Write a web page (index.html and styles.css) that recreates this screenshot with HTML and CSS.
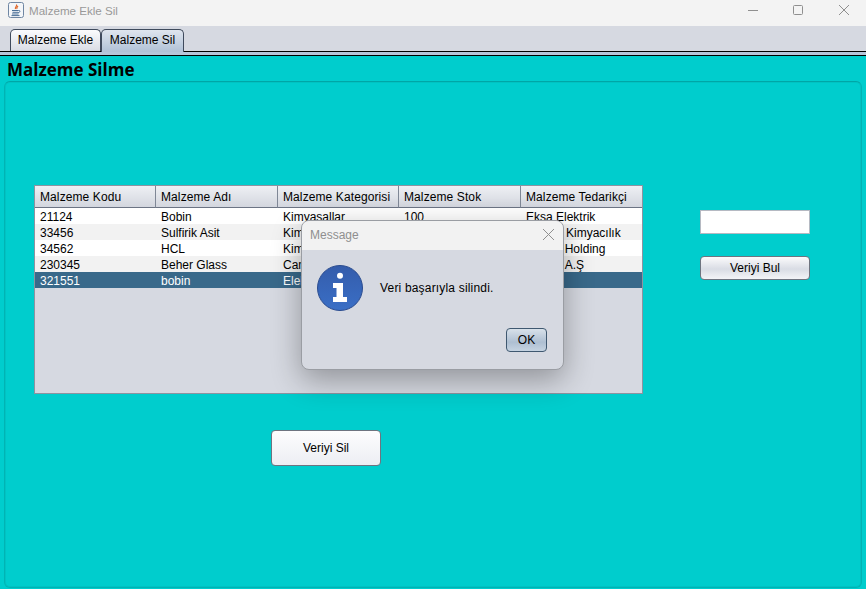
FILE: index.html
```html
<!DOCTYPE html>
<html lang="en">

<head>
    <meta charset="UTF-8">
    <title>Malzeme Ekle Sil</title>
    <link rel="stylesheet" href="styles.css">
</head>

<body>
    <div class="titlebar">
        <svg class="appicon" width="16" height="16" viewBox="0 0 16 16">
            <rect x="0.5" y="0.5" width="15" height="15" rx="2" fill="#f4f6f9" stroke="#6f86a3" />
            <path d="M8.5 2.5c1 1.5-2 2.5-1 4.5M10 4c-1 1-1.8 1.6-1 3" fill="none" stroke="#e0662a" stroke-width="1.2" />
            <path d="M4 8.5h6.5M4.500 10.300h5.500M4 12h6.500M3.500 13.600h8M10.500 8.500c2-.5 2 2-.5 2.300" fill="none" stroke="#4a6f97" stroke-width="1" />
        </svg>
        <span class="apptitle">Malzeme Ekle Sil</span>
        <div class="winbtns">
            <svg width="10" height="10" viewBox="0 0 10 10"><path d="M0 5.500h10" stroke="#8f8f8f" fill="none" /></svg>
            <svg width="10" height="10" viewBox="0 0 10 10"><rect x="0.500" y="0.500" width="9" height="9" rx="1" stroke="#8f8f8f" fill="none" /></svg>
            <svg width="10" height="10" viewBox="0 0 10 10"><path d="M0 0l10 10M10 0L0 10" stroke="#8f8f8f" fill="none" /></svg>
        </div>
    </div>

    <div class="tabbar">
        <div class="tab">Malzeme Ekle</div>
        <div class="tab active">Malzeme Sil</div>
    </div>
    <div class="tabline"></div>

    <div class="content">
        <h1 class="heading">Malzeme Silme</h1>
        <div class="panel">
            <div class="leftcol">
                <div class="tablebox">
                    <table class="grid">
                        <thead>
                            <tr>
                                <th>Malzeme Kodu</th>
                                <th>Malzeme Adı</th>
                                <th>Malzeme Kategorisi</th>
                                <th>Malzeme Stok</th>
                                <th>Malzeme Tedarikçi</th>
                            </tr>
                        </thead>
                        <tbody>
                            <tr>
                                <td>21124</td>
                                <td>Bobin</td>
                                <td>Kimyasallar</td>
                                <td>100</td>
                                <td>Eksa Elektrik</td>
                            </tr>
                            <tr>
                                <td>33456</td>
                                <td>Sulfirik Asit</td>
                                <td>Kimyasallar</td>
                                <td>50</td>
                                <td>Yılmaz Kimyacılık</td>
                            </tr>
                            <tr>
                                <td>34562</td>
                                <td>HCL</td>
                                <td>Kimyasallar</td>
                                <td>75</td>
                                <td>Doğan Holding</td>
                            </tr>
                            <tr>
                                <td>230345</td>
                                <td>Beher Glass</td>
                                <td>Cam</td>
                                <td>20</td>
                                <td>Yüksel A.Ş</td>
                            </tr>
                            <tr class="selected">
                                <td>321551</td>
                                <td>bobin</td>
                                <td>Elektrik</td>
                                <td>10</td>
                                <td></td>
                            </tr>
                        </tbody>
                    </table>
                </div>
                <button class="btn btn-delete">Veriyi Sil</button>
            </div>
            <div class="rightcol">
                <input class="search" type="text">
                <button class="btn btn-find">Veriyi Bul</button>
            </div>
        </div>
    </div>

    <div class="dialog">
        <div class="dialog-title">
            <span>Message</span>
            <svg width="11" height="11" viewBox="0 0 11 11"><path d="M0 0l11 11M11 0L0 11" stroke="#8f8f8f" fill="none" /></svg>
        </div>
        <div class="dialog-body">
            <svg class="infoicon" width="46" height="46" viewBox="0 0 46 46">
                <defs>
                    <linearGradient id="infofill" x1="0" y1="0" x2="0" y2="1">
                        <stop offset="0" stop-color="#345cab" />
                        <stop offset="1" stop-color="#3a6fc6" />
                    </linearGradient>
                </defs>
                <circle cx="23" cy="23" r="22.500" fill="url(#infofill)" stroke="#2b4c8f" />
                <circle cx="23" cy="10.700" r="3" fill="#fff" />
                <path d="M16 18h10v14h4v5H16v-5h3.500V23H16z" fill="#fff" />
            </svg>
            <span class="dialog-text">Veri başarıyla silindi.</span>
        </div>
        <div class="dialog-foot">
            <button class="btn-ok">OK</button>
        </div>
    </div>
</body>

</html>
```

FILE: styles.css
```css
* {
    margin: 0;
    padding: 0;
    box-sizing: border-box;
}

html,
body {
    height: 589px;
    overflow: hidden;
}

body {
    position: relative;
    display: flex;
    flex-direction: column;
    font-family: "Liberation Sans", Arial, sans-serif;
    font-size: 12px;
    color: #000;
    background-color: #00cdcd;
}

/* window title */
.titlebar {
    height: 26px;
    flex: none;
    display: flex;
    align-items: center;
    padding: 0 0 6px 8px;
    background-color: #f3f3f3;
}

.apptitle {
    margin-left: 5px;
    font-size: 11.6px;
    color: #999;
}

.winbtns {
    margin-left: auto;
    display: flex;
    gap: 35px;
    padding-right: 17px;
}

.winbtns svg:nth-child(2) {
    margin-right: 1px;
}

/* tabs */
.tabbar {
    height: 26px;
    flex: none;
    display: flex;
    align-items: flex-end;
    padding: 0 0 0 10px;
    background-color: #d6d9e1;
    border-bottom: 1px solid #000;
}

.tab {
    height: 22px;
    width: 91px;
    line-height: 20px;
    text-align: center;
    border: 1px solid #3f4a5c;
    border-bottom: none;
    border-radius: 5px 5px 0 0;
    background: linear-gradient(#fbfbfd, #d9dce4);
    color: #000;
}

.tab.active {
    width: 83px;
    height: 23px;
    margin-bottom: -1px;
    background: linear-gradient(#dfe5ee, #b0c1d6);
}

.tabline {
    height: 4px;
    flex: none;
    background-color: #b7c6da;
    border-bottom: 1px solid #000;
}

/* content */
.content {
    flex: 1;
    display: flex;
    flex-direction: column;
    min-height: 0;
}

.heading {
    height: 25px;
    flex: none;
    padding: 3px 0 0 7px;
    font-family: "Open Sans", sans-serif;
    font-size: 17px;
    line-height: 22px;
    font-weight: bold;
}

.panel {
    height: 507px;
    flex: none;
    display: flex;
    margin: 0 4px;
    padding: 103px 0 0 29px;
    border: 1px solid #00b4b4;
    border-top-color: #00a6a6;
    border-radius: 6px;
    box-shadow: inset 0 0 0 1px #00c3c3;
}

.leftcol {
    width: 609px;
    flex: none;
}

.tablebox {
    height: 209px;
    border: 1px solid #8d93a0;
    background-color: #d6d9e1;
    overflow: hidden;
}

.grid {
    width: 607px;
    table-layout: fixed;
    border-collapse: separate;
    border-spacing: 0;
}

.grid th {
    height: 22px;
    padding-left: 5px;
    font-weight: normal;
    letter-spacing: .1px;
    text-align: left;
    background: linear-gradient(#eef0f4, #d3d6de);
    border-right: 1px solid #7f8796;
    border-bottom: 1px solid #6c7484;
}

.grid th:nth-child(1),
.grid th:nth-child(3),
.grid th:nth-child(5) {
    width: 121px;
}

.grid th:nth-child(2),
.grid th:nth-child(4) {
    width: 122px;
}

.grid th:last-child {
    border-right: none;
}

.grid td {
    height: 16px;
    padding: 2px 0 0 5px;
    line-height: 14px;
    white-space: nowrap;
    overflow: hidden;
    background-color: #fff;
}

.grid tbody tr:nth-child(even) td {
    background-color: #f2f2f2;
}

.grid tbody tr.selected td {
    background-color: #39698a;
    color: #fff;
}

.btn {
    display: block;
    font-family: "Liberation Sans", Arial, sans-serif;
    font-size: 12px;
    color: #000;
    width: 110px;
    border: 1px solid #6e7480;
    border-radius: 4px;
}

.btn-delete {
    height: 36px;
    margin: 36px 0 0 237px;
    background: linear-gradient(#fdfdfe, #eceef3);
}

.rightcol {
    margin-left: 57px;
    padding-top: 25px;
}

.search {
    display: block;
    width: 110px;
    height: 24px;
    border: 1px solid #b5b9c2;
    background-color: #fff;
}

.btn-find {
    height: 24px;
    margin-top: 22px;
    background: linear-gradient(#fbfbfc 0%, #d9dce4 55%, #f3f4f7 100%);
}

/* message dialog, sits over the page */
.dialog {
    position: absolute;
    left: 301px;
    top: 220px;
    width: 263px;
    height: 150px;
    display: flex;
    flex-direction: column;
    background-color: #d6d9e1;
    border: 1px solid #9a9da3;
    border-radius: 8px;
    box-shadow: 0 10px 30px rgba(0, 0, 0, .32);
    overflow: hidden;
}

.dialog-title {
    height: 29px;
    flex: none;
    display: flex;
    align-items: center;
    justify-content: space-between;
    padding: 0 9px 2px 8px;
    background-color: #f2f2f2;
    color: #8f8f8f;
}

.dialog-body {
    height: 67px;
    flex: none;
    display: flex;
    align-items: flex-start;
    padding: 15px 0 0 15px;
}

.dialog-text {
    margin: 16px 0 0 17px;
    letter-spacing: .18px;
}

.dialog-foot {
    display: flex;
    justify-content: flex-end;
    padding: 11px 16px 0 0;
}

.btn-ok {
    width: 41px;
    height: 24px;
    font-family: "Liberation Sans", Arial, sans-serif;
    font-size: 12px;
    color: #000;
    border: 1px solid #3f5870;
    border-radius: 4px;
    background: linear-gradient(#d8e1ea 0%, #aebfd2 60%, #c5d3e1 100%);
}
```
